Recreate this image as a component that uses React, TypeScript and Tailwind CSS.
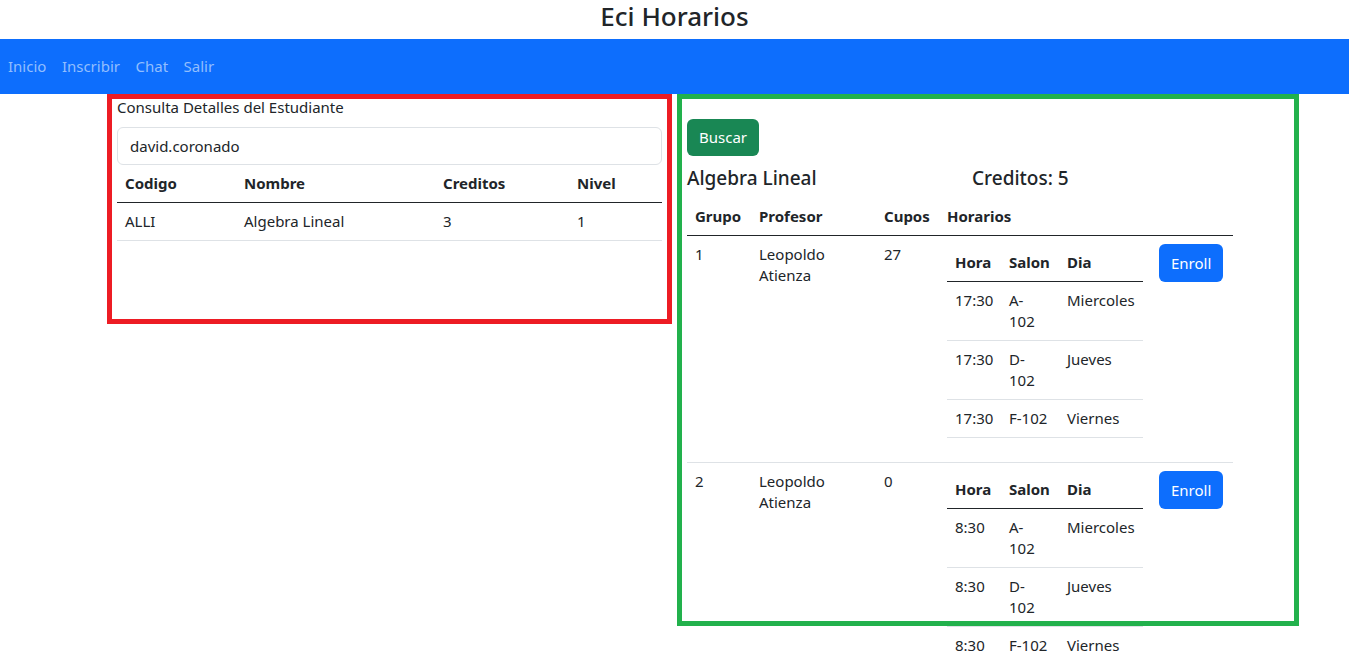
import React from 'react';

const horariosGrupo1 = [
  { hora: '17:30', salon: 'A-102', dia: 'Miercoles' },
  { hora: '17:30', salon: 'D-102', dia: 'Jueves' },
  { hora: '17:30', salon: 'F-102', dia: 'Viernes' },
];

const horariosGrupo2 = [
  { hora: '8:30', salon: 'A-102', dia: 'Miercoles' },
  { hora: '8:30', salon: 'D-102', dia: 'Jueves' },
  { hora: '8:30', salon: 'F-102', dia: 'Viernes' },
];

const grupos = [
  { grupo: '1', profesor: 'Leopoldo Atienza', cupos: '27', horarios: horariosGrupo1 },
  { grupo: '2', profesor: 'Leopoldo Atienza', cupos: '0', horarios: horariosGrupo2 },
];

type Horario = { hora: string; salon: string; dia: string };

const HorarioTable: React.FC<{ horarios: Horario[] }> = ({ horarios }) => (
  <table className="w-[196px] table-fixed border-collapse mb-4">
    <colgroup>
      <col className="w-[54px]" />
      <col className="w-[58px]" />
      <col className="w-[84px]" />
    </colgroup>
    <thead>
      <tr className="border-b border-[#212529]">
        <th className="px-2 py-2 text-left font-bold">Hora</th>
        <th className="pl-2 pr-[10px] py-2 text-left font-bold">Salon</th>
        <th className="px-2 py-2 text-left font-bold">Dia</th>
      </tr>
    </thead>
    <tbody>
      {horarios.map((h, i) => (
        <tr key={i} className="border-b border-[#dee2e6]">
          <td className="px-2 py-2 align-top">{h.hora}</td>
          <td className="pl-2 pr-[10px] py-2 align-top">{h.salon}</td>
          <td className="px-2 py-2 align-top">{h.dia}</td>
        </tr>
      ))}
    </tbody>
  </table>
);

export default function App() {
  return (
    <div className="min-h-screen bg-white text-[#212529] text-[15px] leading-[21px] font-['Segoe_UI','Noto_Sans',sans-serif]">
      <h1 className="h-[39px] pt-[1px] text-center text-[26px] leading-[30px] font-medium">Eci Horarios</h1>

      <nav className="h-[55px] bg-[#0d6efd] flex items-center pl-2">
        {['Inicio', 'Inscribir', 'Chat', 'Salir'].map((l) => (
          <a key={l} className="mr-[15.5px] text-[#92befe] cursor-pointer">
            {l}
          </a>
        ))}
      </nav>

      <div className="flex items-start gap-[5px] pl-[107px]">
        {/* Consulta estudiante */}
        <section className="w-[565px] h-[230px] border-[5px] border-[#ed1c24] px-[5px]">
          <label className="block -mt-[2px]">Consulta Detalles del Estudiante</label>
          <input
            readOnly
            value="david.coronado"
            className="mt-[9px] block w-full h-[38px] px-3 border border-[#dee2e6] rounded-[6px] outline-none text-[15px]"
          />
          <table className="w-full table-fixed border-collapse">
            <colgroup>
              <col className="w-[119px]" />
              <col className="w-[199px]" />
              <col className="w-[134px]" />
              <col />
            </colgroup>
            <thead>
              <tr className="border-b border-[#212529]">
                <th className="px-2 py-2 text-left font-bold">Codigo</th>
                <th className="px-2 py-2 text-left font-bold">Nombre</th>
                <th className="px-2 py-2 text-left font-bold">Creditos</th>
                <th className="px-2 py-2 text-left font-bold">Nivel</th>
              </tr>
            </thead>
            <tbody>
              <tr className="border-b border-[#dee2e6]">
                <td className="px-2 py-2">ALLI</td>
                <td className="px-2 py-2">Algebra Lineal</td>
                <td className="px-2 py-2">3</td>
                <td className="px-2 py-2">1</td>
              </tr>
            </tbody>
          </table>
        </section>

        {/* Materias */}
        <section className="w-[622px] h-[532px] border-[5px] border-[#22b14c] px-[5px]">
          <button className="mt-[20px] h-[37px] px-3 rounded-[6px] bg-[#198754] text-white">Buscar</button>
          <div className="mt-[10px] mb-2 grid grid-cols-[285px_1fr] text-[19px] leading-[24px] font-medium">
            <span>Algebra Lineal</span>
            <span>Creditos: 5</span>
          </div>
          <table className="w-[546px] table-fixed border-collapse">
            <colgroup>
              <col className="w-[64px]" />
              <col className="w-[125px]" />
              <col className="w-[63px]" />
              <col className="w-[212px]" />
              <col className="w-[82px]" />
            </colgroup>
            <thead>
              <tr className="border-b border-[#212529]">
                <th className="px-2 py-2 text-left font-bold">Grupo</th>
                <th className="px-2 py-2 text-left font-bold">Profesor</th>
                <th className="px-2 py-2 text-left font-bold">Cupos</th>
                <th className="px-2 py-2 text-left font-bold">Horarios</th>
                <th className="px-2 py-2"></th>
              </tr>
            </thead>
            <tbody>
              {grupos.map((g) => (
                <tr key={g.grupo} className="border-b border-[#dee2e6]">
                  <td className="px-2 py-2 align-top">{g.grupo}</td>
                  <td className="px-2 py-2 align-top">{g.profesor}</td>
                  <td className="px-2 py-2 align-top">{g.cupos}</td>
                  <td className="px-2 py-2 align-top">
                    <HorarioTable horarios={g.horarios} />
                  </td>
                  <td className="px-2 py-2 align-top">
                    <button className="h-[38px] px-3 rounded-[6px] bg-[#0d6efd] text-white">Enroll</button>
                  </td>
                </tr>
              ))}
            </tbody>
          </table>
        </section>
      </div>
    </div>
  );
}
